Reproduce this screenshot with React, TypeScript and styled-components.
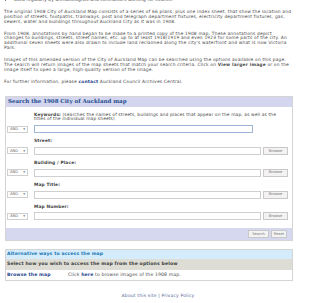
import React from 'react'
import styled, { createGlobalStyle } from 'styled-components'

const GlobalStyle = createGlobalStyle`
  html, body {
    margin: 0;
    padding: 0;
    background: #ffffff;
  }
  body {
    font-family: "DejaVu Sans", Verdana, sans-serif;
    font-size: 4.4px;
    letter-spacing: 0.1px;
    line-height: 4.8px;
    color: #4a4a4a;
  }
`

const Page = styled.div`
  width: 300px;
  padding: 0 0 0 4px;
`

const BulletList = styled.ul`
  margin: -2.4px 0 0;
  padding-left: 10px;
  list-style: disc;
`

const Para = styled.p<{ $first?: boolean }>`
  margin: ${(p) => (p.$first ? '7.5px' : '0')} 0 7.3px;
  white-space: nowrap;
  letter-spacing: 0.18px;
`

const Link = styled.a`
  color: #1f3f8f;
  font-weight: bold;
  text-decoration: none;
`

const SearchBox = styled.div`
  margin: 11px 0 0 1px;
  width: 288px;
  border: 1px solid #d4d4d4;
  box-sizing: border-box;
  display: flex;
  flex-direction: column;
`

const SearchHeader = styled.div`
  background: #d3d6ee;
  color: #1c4a8c;
  font-family: "DejaVu Serif", Georgia, serif;
  font-weight: bold;
  font-size: 5.5px;
  letter-spacing: 0;
  height: 10px;
  display: flex;
  align-items: center;
  padding-left: 2px;
`

const SearchBody = styled.div`
  background: #ffffff;
  padding: 6px 6px 8px 1px;
  display: flex;
  flex-direction: column;
  gap: 6px;
`

const Field = styled.div`
  display: grid;
  grid-template-columns: 27px 1fr;
  row-gap: 3px;
  align-items: center;
`

const Label = styled.div`
  grid-column: 2;
  color: #4a4a4a;
  letter-spacing: 0.12px;

  b {
    color: #444;
  }
`

const Select = styled.div`
  grid-column: 1;
  width: 21px;
  height: 7px;
  box-sizing: border-box;
  border: 1px solid #cfcfcf;
  background: #fff;
  display: flex;
  align-items: center;
  justify-content: space-between;
  padding: 0 2px;
  font-size: 3.7px;
  letter-spacing: 0;
  color: #666;
`

const InputRow = styled.div`
  grid-column: 2;
  display: flex;
  gap: 2px;
  align-items: center;
`

const TextInput = styled.div<{ $focused?: boolean; $wide?: boolean }>`
  width: ${(p) => (p.$wide ? '219px' : '227px')};
  height: 8px;
  box-sizing: border-box;
  border: 1px solid ${(p) => (p.$focused ? '#9fb6d8' : '#cfcfcf')};
  background: #fff;
`

const Button = styled.div<{ $w: number }>`
  width: ${(p) => p.$w}px;
  height: 8px;
  box-sizing: border-box;
  border: 1px solid #c8c8c8;
  background: #f3f3f3;
  color: #777;
  font-size: 3.7px;
  letter-spacing: 0;
  display: flex;
  align-items: center;
  justify-content: center;
`

const SearchFooter = styled.div`
  background: #d5d8ee;
  height: 12px;
  display: flex;
  align-items: center;
  justify-content: flex-end;
  gap: 2px;
  padding-right: 5px;
`

const AltBox = styled.div`
  margin: 8px 0 0 1px;
  width: 288px;
  border: 1px solid #d4d4d4;
  box-sizing: border-box;
  display: flex;
  flex-direction: column;
  font-size: 4.6px;
  letter-spacing: 0.12px;
`

const AltHeader = styled.div`
  background: #d4ecfb;
  color: #1d78b4;
  font-weight: bold;
  height: 9px;
  display: flex;
  align-items: center;
  padding-left: 1px;
`

const AltSub = styled.div`
  background: #dddcd5;
  color: #3c3c3c;
  font-weight: bold;
  height: 11px;
  display: flex;
  align-items: center;
  padding-left: 1px;
`

const AltRow = styled.div`
  background: #fff;
  height: 10px;
  display: grid;
  grid-template-columns: 61px 1fr;
  align-items: center;
  padding-left: 1px;
`

const Footer = styled.div`
  margin-top: 13px;
  text-align: center;
  width: 308px;
  font-size: 4.6px;
  letter-spacing: 0.12px;
  color: #5a6a9a;
`

const fields = ['Street:', 'Building / Place:', 'Map Title:', 'Map Number:']

function AndSelect() {
  return (
    <Select>
      <span>AND</span>
      <span>▾</span>
    </Select>
  )
}

export default function App() {
  return (
    <>
      <GlobalStyle />
      <Page>
        <BulletList>
          <li>used regularly by archaeologists and contractors working for council.</li>
        </BulletList>
        <Para $first>
          The original 1908 City of Auckland Map consists of a series of 66 plans, plus one index sheet, that show the location and
          <br />
          position of streets, footpaths, tramways, post and telegraph department fixtures, electricity department fixtures, gas,
          <br />
          sewers, water and buildings throughout Auckland City as it was in 1908.
        </Para>
        <Para>
          From 1908, annotations by hand began to be made to a printed copy of the 1908 map. These annotations depict
          <br />
          changes to buildings, streets, street names, etc. up to at least 1918/1919 and even 1923 for some parts of the city. An
          <br />
          additional seven sheets were also drawn to include land reclaimed along the city's waterfront and what is now Victoria
          <br />
          Park.
        </Para>
        <Para>
          Images of this amended version of the City of Auckland Map can be searched using the options available on this page.
          <br />
          The search will return images of the map sheets that match your search criteria. Click on <b>View larger image</b> or on the
          <br />
          image itself to open a large, high-quality version of the image.
        </Para>
        <Para>
          For further information, please <Link>contact</Link> Auckland Council Archives Central.
        </Para>

        <SearchBox>
          <SearchHeader>Search the 1908 City of Auckland map</SearchHeader>
          <SearchBody>
            <Field>
              <Label>
                <b>Keywords:</b> (searches the names of streets, buildings and places that appear on the map, as well as the
                <br />
                titles of the individual map sheets)
              </Label>
              <AndSelect />
              <InputRow>
                <TextInput $focused $wide />
              </InputRow>
            </Field>
            {fields.map((label) => (
              <Field key={label}>
                <Label>
                  <b>{label}</b>
                </Label>
                <AndSelect />
                <InputRow>
                  <TextInput />
                  <Button $w={25}>Browse</Button>
                </InputRow>
              </Field>
            ))}
          </SearchBody>
          <SearchFooter>
            <Button $w={21}>Search</Button>
            <Button $w={16}>Reset</Button>
          </SearchFooter>
        </SearchBox>

        <AltBox>
          <AltHeader>Alternative ways to access the map</AltHeader>
          <AltSub>Select how you wish to access the map from the options below</AltSub>
          <AltRow>
            <Link>Browse the map</Link>
            <span>
              Click <Link>here</Link> to browse images of the 1908 map.
            </span>
          </AltRow>
        </AltBox>

        <Footer>About this site | Privacy Policy</Footer>
      </Page>
    </>
  )
}
